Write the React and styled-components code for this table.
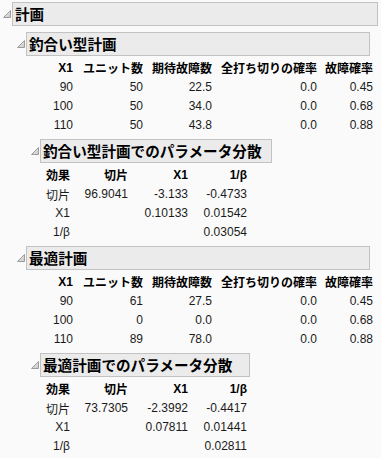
import React from "react";
import styled, { createGlobalStyle } from "styled-components";

const Global = createGlobalStyle`
  html, body { margin: 0; padding: 0; background: #fafafa; }
  body {
    font-family: "Liberation Sans", "Noto Sans CJK JP", sans-serif;
    font-size: 12px;
    color: #1a1a1a;
  }
`;

const Outline = styled.div`
  display: flex;
  flex-direction: column;
  width: ${(p) => (p.$fit ? "fit-content" : "auto")};
  margin-top: ${(p) => (p.$root ? "0" : "4px")};
`;

const Page = styled.div`
  padding-top: 2px;
  width: 381px;
`;

const HeaderRow = styled.div`
  display: flex;
  align-items: flex-start;
`;

const Toggle = styled.svg`
  flex: none;
  width: 8px;
  height: 8px;
  margin: 8px 1px 0 3px;
`;

const TitleBox = styled.div`
  flex: 1;
  box-sizing: border-box;
  height: 24px;
  display: flex;
  align-items: center;
  padding: 0 10px 0 2px;
  margin-right: ${(p) => (p.$fit ? "0" : "3px")};
  background: #ebebeb;
  border: 1px solid #c2c2c2;
  font-family: "Noto Sans CJK JP", "Liberation Sans", sans-serif;
  font-weight: 700;
  font-size: 14.6px;
  line-height: 1;
  color: #000;
  white-space: nowrap;
`;

const Body = styled.div`
  padding: 2px ${(p) => (p.$fit ? "3px" : "0")} 0 14px;
  display: flex;
  flex-direction: column;
  align-items: flex-start;
`;

const Grid = styled.div`
  display: grid;
  grid-template-columns: ${(p) => p.$cols};
`;

const HeadCell = styled.div`
  height: 20px;
  line-height: 20px;
  text-align: right;
  white-space: nowrap;
  font-weight: 700;
  color: #000;
  font-family: ${(p) =>
    p.$jp
      ? '"Noto Sans CJK JP", "Liberation Sans", sans-serif'
      : '"Liberation Sans", "Noto Sans CJK JP", sans-serif'};
`;

const Cell = styled.div`
  height: 19px;
  line-height: 19px;
  text-align: right;
  white-space: nowrap;
  color: #1a1a1a;
  font-family: ${(p) =>
    p.$jp
      ? '"Noto Sans CJK JP", "Liberation Sans", sans-serif'
      : '"Liberation Sans", "Noto Sans CJK JP", sans-serif'};
`;

const isJp = (s) => /[\u3040-\u30ff\u4e00-\u9fff]/.test(s);

function Triangle() {
  return (
    <Toggle viewBox="0 0 8 8">
      <defs>
        <linearGradient id="tg" x1="0" y1="0" x2="1" y2="1">
          <stop offset="0" stopColor="#f0f0f0" />
          <stop offset="1" stopColor="#c8c8c8" />
        </linearGradient>
      </defs>
      <polygon
        points="0.5,7.5 7.5,7.5 7.5,0.5"
        fill="url(#tg)"
        stroke="#9c9c9c"
        strokeWidth="1"
        strokeLinejoin="miter"
      />
    </Toggle>
  );
}

function Section({ title, fit, root, children }) {
  return (
    <Outline $fit={fit} $root={root}>
      <HeaderRow>
        <Triangle />
        <TitleBox $fit={fit}>{title}</TitleBox>
      </HeaderRow>
      <Body $fit={fit}>{children}</Body>
    </Outline>
  );
}

function DataTable({ cols, head, rows }) {
  return (
    <Grid $cols={cols}>
      {head.map((h, i) => (
        <HeadCell key={"h" + i} $jp={isJp(h)}>
          {h}
        </HeadCell>
      ))}
      {rows.map((r, ri) =>
        r.map((c, ci) => (
          <Cell key={ri + "-" + ci} $jp={isJp(c)}>
            {c}
          </Cell>
        ))
      )}
    </Grid>
  );
}

const designCols = "45px 70px 69px 105px 56px";
const varCols = "28px 58px 60px 59px";
const designHead = ["X1", "ユニット数", "期待故障数", "全打ち切りの確率", "故障確率"];
const varHead = ["効果", "切片", "X1", "1/β"];

export default function App() {
  return (
    <>
      <Global />
      <Page>
        <Section title="計画" root>
          <Section title="釣合い型計画">
            <DataTable
              cols={designCols}
              head={designHead}
              rows={[
                ["90", "50", "22.5", "0.0", "0.45"],
                ["100", "50", "34.0", "0.0", "0.68"],
                ["110", "50", "43.8", "0.0", "0.88"],
              ]}
            />
            <Section title="釣合い型計画でのパラメータ分散" fit>
              <DataTable
                cols={varCols}
                head={varHead}
                rows={[
                  ["切片", "96.9041", "-3.133", "-0.4733"],
                  ["X1", "", "0.10133", "0.01542"],
                  ["1/β", "", "", "0.03054"],
                ]}
              />
            </Section>
          </Section>
          <Section title="最適計画">
            <DataTable
              cols={designCols}
              head={designHead}
              rows={[
                ["90", "61", "27.5", "0.0", "0.45"],
                ["100", "0", "0.0", "0.0", "0.68"],
                ["110", "89", "78.0", "0.0", "0.88"],
              ]}
            />
            <Section title="最適計画でのパラメータ分散" fit>
              <DataTable
                cols={varCols}
                head={varHead}
                rows={[
                  ["切片", "73.7305", "-2.3992", "-0.4417"],
                  ["X1", "", "0.07811", "0.01441"],
                  ["1/β", "", "", "0.02811"],
                ]}
              />
            </Section>
          </Section>
        </Section>
      </Page>
    </>
  );
}
